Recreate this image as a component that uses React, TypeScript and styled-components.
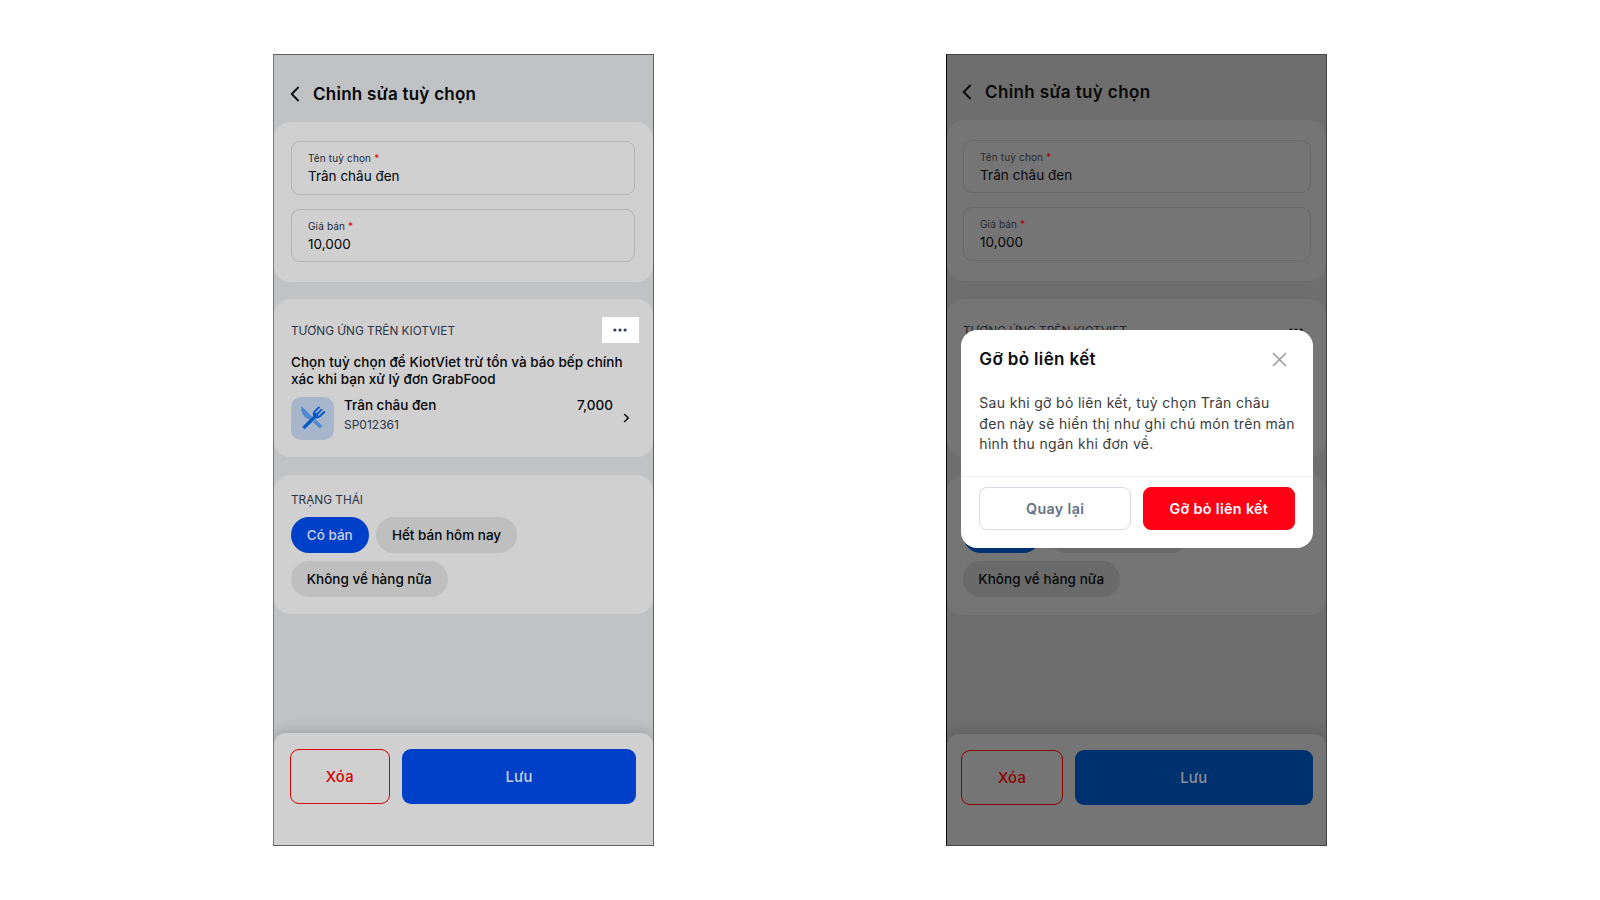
import styled, { createGlobalStyle, ThemeProvider } from 'styled-components';

const GlobalStyle = createGlobalStyle`
  * {
    box-sizing: border-box;
  }

  body {
    margin: 0;
    background: #fff;
  }
`;

const dimmed = {
  frame: '#5f6061',
  frameLeft: '#77787a',
  page: '#c1c2c4',
  card: '#d0d0d0',
  fieldBorder: '#b3b5b9',
  text: '#040506',
  label: '#1d2735',
  muted: '#2a3547',
  required: '#d8000f',
  pill: '#bfbfbf',
  primary: '#0040c8',
  onPrimary: '#c9d0dc',
  danger: '#d60000',
  shadow: 'rgba(60, 64, 70, 0.22)',
  top: 67,
  headerPad: 11,
  headerInset: 16,
  inset: 17,
  tail: 18.5,
  cardTop: 19,
  fieldGap: 14,
  firstCard: 160,
  secondGap: 17,
  secondCard: 158,
  thirdGap: 18,
  thirdCard: 139,
  footer: 112,
  actionTop: 15.5,
  actionInset: 15.5,
  actionTail: 17,
  deleteWidth: 100.5,
  pillGap: 8,
  titleTracking: 0.26,
  tracking: 0,
  contents: 'visible'
};

const covered = {
  ...dimmed,
  frame: '#454545',
  frameLeft: '#080808',
  page: '#6e6e6e',
  card: '#757575',
  fieldBorder: '#696a6b',
  text: '#080808',
  label: '#27292d',
  muted: '#20252d',
  required: '#a50008',
  pill: '#6a6a6a',
  primary: '#00316f',
  onPrimary: '#8b929a',
  danger: '#8d0000',
  shadow: 'rgba(30, 32, 34, 0.2)',
  top: 65,
  headerPad: 9,
  headerInset: 15,
  inset: 16,
  tail: 15.5,
  cardTop: 19.5,
  firstCard: 161,
  secondGap: 17.5,
  secondCard: 158.5,
  thirdGap: 17.5,
  thirdCard: 140.5,
  footer: 111,
  actionTop: 15.5,
  actionInset: 14,
  actionTail: 13.5,
  deleteWidth: 102,
  pillGap: 8.5,
  titleTracking: 0.38,
  tracking: 0.06,
  contents: 'hidden'
};

function ForkKnifeIcon() {
  return (
    <svg width="26" height="24" viewBox="0 0 26 24">
      <path d="M1.6 .2 L12.6 11 L10 14.6 L8 12.8 L6.6 12.6 C2.6 9 .2 5.4 1.6 .2Z" fill="#5389ce" />
      <path d="M15.6 13.6 L22.4 20 L19.9 22.6 L13 16.2Z" fill="#5389ce" />
      <g fill="none" stroke="#0759c9" strokeLinecap="round">
        <path d="M4.6 21 L15.6 10.2" strokeWidth="3.3" strokeLinecap="square" />
        <path d="M18.9 1.4 L14.6 5.6 C13.2 7.2 13.6 9.4 14.8 10.4 C16.2 11.6 18.4 11.6 19.8 10.2 L24.2 6" strokeWidth="1.9" />
        <path d="M16.2 9 L21.6 3.7" strokeWidth="1.8" />
      </g>
      <path d="M13.9 7 L16.4 6.8 L18.4 8.8 L18.2 11 C14.5 11.8 13 10 13.9 7Z" fill="#0759c9" />
    </svg>
  );
}

function EditOption({ theme, highlight = false, children = null }: any) {
  return (
    <ThemeProvider theme={theme}>
      <Phone>
        <Header>
          <svg width="10" height="16" viewBox="0 0 10 16" fill="none" stroke="currentColor" strokeWidth="1.8">
            <path d="M8.6 1 L1.7 8 L8.6 15" />
          </svg>
          <Title>Chỉnh sửa tuỳ chọn</Title>
        </Header>

        <FormCard>
          <Field label="Tên tuỳ chọn" value="Trân châu đen" />
          <Field label="Giá bán" value="10,000" />
        </FormCard>

        <LinkCard>
          <CardHead>
            <Caption>TƯƠNG ỨNG TRÊN KIOTVIET</Caption>
            <MoreButton $highlight={highlight}>
              <svg width="14" height="4" viewBox="0 0 14 4" fill="currentColor">
                <circle cx="1.9" cy="2" r="1.6" />
                <circle cx="7" cy="2" r="1.6" />
                <circle cx="12.1" cy="2" r="1.6" />
              </svg>
            </MoreButton>
          </CardHead>
          <LinkBody>
            <Hint>
              Chọn tuỳ chọn để KiotViet trừ tồn và báo bếp chính
              <br />
              xác khi bạn xử lý đơn GrabFood
            </Hint>
            <Product>
              <Thumb>
                <ForkKnifeIcon />
              </Thumb>
              <ProductInfo>
                <ProductName>Trân châu đen</ProductName>
                <ProductCode>SP012361</ProductCode>
              </ProductInfo>
              <Price>7,000</Price>
              <Chevron width="7" height="10" viewBox="0 0 7 10" fill="none" stroke="currentColor" strokeWidth="1.5">
                <path d="M1.2 1 L5.2 5 L1.2 9" />
              </Chevron>
            </Product>
          </LinkBody>
        </LinkCard>

        <StatusCard>
          <Caption>TRẠNG THÁI</Caption>
          <Pills>
            <Pill $width={77.5} $active>Có bán</Pill>
            <Pill $width={141}>Hết bán hôm nay</Pill>
            <Pill $width={156.5}>Không về hàng nữa</Pill>
          </Pills>
        </StatusCard>

        <Footer>
          <DeleteButton>Xóa</DeleteButton>
          <SaveButton>Lưu</SaveButton>
        </Footer>

        {children}
      </Phone>
    </ThemeProvider>
  );
}

function Field({ label, value }: { label: string; value: string }) {
  return (
    <FieldBox>
      <FieldLabel>
        {label} <Required>*</Required>
      </FieldLabel>
      <FieldValue>{value}</FieldValue>
    </FieldBox>
  );
}

export default function App() {
  return (
    <>
      <GlobalStyle />
      <Stage>
        <EditOption theme={dimmed} highlight />
        <EditOption theme={covered}>
          <Dialog>
            <DialogHead>
              <DialogTitle>Gỡ bỏ liên kết</DialogTitle>
              <svg width="15" height="15" viewBox="0 0 15 15" fill="none" stroke="#999" strokeWidth="1.5">
                <path d="M1 1 L14 14 M14 1 L1 14" />
              </svg>
            </DialogHead>
            <DialogText>
              Sau khi gỡ bỏ liên kết, tuỳ chọn Trân châu
              <br />
              đen này sẽ hiển thị như ghi chú món trên màn
              <br />
              hình thu ngân khi đơn về.
            </DialogText>
            <DialogActions>
              <DialogButton>Quay lại</DialogButton>
              <DialogButton $danger>Gỡ bỏ liên kết</DialogButton>
            </DialogActions>
          </Dialog>
        </EditOption>
      </Stage>
    </>
  );
}

const Stage = styled.main`
  display: flex;
  gap: 292px;
  width: 1600px;
  height: 900px;
  padding: 54px 0 0 273px;
  overflow: hidden;
  font-family: Inter, 'Liberation Sans', sans-serif;
`;

const Phone = styled.section`
  position: relative;
  display: flex;
  flex-direction: column;
  flex: none;
  width: 381px;
  height: 792px;
  overflow: hidden;
  border: 1px solid ${({ theme }) => theme.frame};
  border-left-color: ${({ theme }) => theme.frameLeft};
  background: ${({ theme }) => theme.page};
  color: ${({ theme }) => theme.text};
`;

const Header = styled.header`
  display: flex;
  flex: none;
  align-items: center;
  gap: 13px;
  height: ${({ theme }) => theme.top}px;
  padding: ${({ theme }) => theme.headerPad}px 0 0 ${({ theme }) => theme.headerInset}px;
`;

const Title = styled.h1`
  margin: 0;
  font-size: 17px;
  font-weight: 600;
  line-height: 22px;
  letter-spacing: ${({ theme }) => theme.titleTracking}px;
  white-space: nowrap;
`;

const Card = styled.section`
  flex: none;
  padding: 0 ${({ theme }) => theme.tail}px 0 ${({ theme }) => theme.inset}px;
  border-radius: 16px;
  background: ${({ theme }) => theme.card};
`;

const FormCard = styled(Card)`
  display: flex;
  flex-direction: column;
  gap: ${({ theme }) => theme.fieldGap}px;
  height: ${({ theme }) => theme.firstCard}px;
  padding-top: ${({ theme }) => theme.cardTop}px;
`;

const FieldBox = styled.div`
  height: 53.5px;
  padding: 9px 16px 0;
  border: 1px solid ${({ theme }) => theme.fieldBorder};
  border-radius: 9px;
`;

const FieldLabel = styled.div`
  font-size: 10px;
  line-height: 15px;
  letter-spacing: 0.15px;
  color: ${({ theme }) => theme.label};
`;

const Required = styled.span`
  color: ${({ theme }) => theme.required};
`;

const FieldValue = styled.div`
  margin-top: 1px;
  font-size: 13.5px;
  line-height: 19px;
  letter-spacing: ${({ theme }) => theme.tracking}px;
`;

const LinkCard = styled(Card)`
  height: ${({ theme }) => theme.secondCard}px;
  margin-top: ${({ theme }) => theme.secondGap}px;
  padding-top: 18px;
`;

const CardHead = styled.div`
  display: flex;
  align-items: center;
  justify-content: space-between;
  height: 26px;
`;

const Caption = styled.h2`
  margin: 0;
  font-size: 11.8px;
  font-weight: 400;
  line-height: 18px;
  color: ${({ theme }) => theme.muted};

  ${CardHead} & {
    padding-top: 2px;
  }
`;

const MoreButton = styled.div<{ $highlight: boolean }>`
  display: flex;
  align-items: center;
  justify-content: center;
  width: 37px;
  height: 26px;
  margin-right: -4px;
  background: ${({ $highlight }) => ($highlight ? '#fff' : 'transparent')};
  color: ${({ theme, $highlight }) => ($highlight ? '#344054' : theme.text)};
`;

const LinkBody = styled.div`
  visibility: ${({ theme }) => theme.contents};
`;

const Hint = styled.p`
  margin: 11.4px 0 0;
  font-size: 13.5px;
  font-weight: 500;
  line-height: 16.6px;
  letter-spacing: 0.05px;
  white-space: nowrap;
`;

const Product = styled.div`
  display: flex;
  margin-top: 9px;
`;

const Thumb = styled.div`
  display: flex;
  align-items: center;
  justify-content: center;
  width: 43px;
  height: 43px;
  border-radius: 10px;
  background: #a8b6cb;
`;

const ProductInfo = styled.div`
  flex: 1;
  margin-left: 10px;
`;

const ProductName = styled.div`
  font-size: 13.5px;
  font-weight: 500;
  line-height: 17px;
`;

const ProductCode = styled.div`
  margin-top: 2px;
  font-size: 12px;
  line-height: 18px;
  color: ${({ theme }) => theme.muted};
`;

const Price = styled.div`
  font-size: 13.5px;
  font-weight: 500;
  line-height: 17px;
`;

const Chevron = styled.svg`
  align-self: center;
  margin: 0 5px 1px 9.5px;
`;

const StatusCard = styled(Card)`
  height: ${({ theme }) => theme.thirdCard}px;
  margin-top: ${({ theme }) => theme.thirdGap}px;
  padding-top: 16px;
`;

const Pills = styled.div`
  display: flex;
  flex-wrap: wrap;
  gap: ${({ theme }) => theme.pillGap}px 7.5px;
  margin-top: 8px;
`;

const Pill = styled.div<{ $width: number; $active?: boolean }>`
  display: flex;
  align-items: center;
  justify-content: center;
  width: ${({ $width }) => $width}px;
  height: 36px;
  border-radius: 18px;
  background: ${({ theme, $active }) => ($active ? theme.primary : theme.pill)};
  color: ${({ theme, $active }) => ($active ? theme.onPrimary : theme.text)};
  font-size: 13.5px;
  font-weight: 500;
  letter-spacing: ${({ theme }) => theme.tracking}px;
  white-space: nowrap;
`;

const Footer = styled.footer`
  display: flex;
  gap: 12px;
  height: ${({ theme }) => theme.footer}px;
  margin-top: auto;
  padding: ${({ theme }) => theme.actionTop}px ${({ theme }) => theme.actionTail}px 0
    ${({ theme }) => theme.actionInset}px;
  border-radius: 12px 12px 0 0;
  background: ${({ theme }) => theme.card};
  box-shadow: 0 -3px 12px ${({ theme }) => theme.shadow};
`;

const FooterButton = styled.div`
  display: flex;
  align-items: center;
  justify-content: center;
  height: 55px;
  padding-top: 1px;
  border-radius: 9px;
  font-size: 14.8px;
  font-weight: 500;
  letter-spacing: 0.2px;
`;

const DeleteButton = styled(FooterButton)`
  width: ${({ theme }) => theme.deleteWidth}px;
  border: 1px solid ${({ theme }) => theme.danger};
  color: ${({ theme }) => theme.danger};
`;

const SaveButton = styled(FooterButton)`
  flex: 1;
  background: ${({ theme }) => theme.primary};
  color: ${({ theme }) => theme.onPrimary};
`;

const Dialog = styled.div`
  position: absolute;
  top: 275px;
  left: 14.3px;
  width: 351.5px;
  height: 218px;
  border-radius: 16px;
  background: #fff;
`;

const DialogHead = styled.div`
  display: flex;
  align-items: center;
  justify-content: space-between;
  height: 58px;
  padding: 0 26px 0 18px;
`;

const DialogTitle = styled.h2`
  margin: 0;
  font-size: 17px;
  font-weight: 600;
  letter-spacing: 0.36px;
  color: #0b0d10;
`;

const DialogText = styled.p`
  height: 89px;
  margin: 0;
  padding: 5px 0 0 18px;
  border-bottom: 1px solid #eceef0;
  font-size: 14px;
  line-height: 20.6px;
  letter-spacing: 0.32px;
  white-space: nowrap;
  color: #3b3b3b;
`;

const DialogActions = styled.div`
  display: flex;
  gap: 12px;
  padding: 10px 18px 0;
`;

const DialogButton = styled.div<{ $danger?: boolean }>`
  display: flex;
  flex: 1;
  align-items: center;
  justify-content: center;
  height: 43px;
  border: 1px solid ${({ $danger }) => ($danger ? '#ff0015' : '#d5dae0')};
  border-radius: 8px;
  background: ${({ $danger }) => ($danger ? '#ff0015' : '#fff')};
  color: ${({ $danger }) => ($danger ? '#fff' : '#667385')};
  font-size: 14.3px;
  font-weight: 600;
  letter-spacing: 0.35px;
`;
